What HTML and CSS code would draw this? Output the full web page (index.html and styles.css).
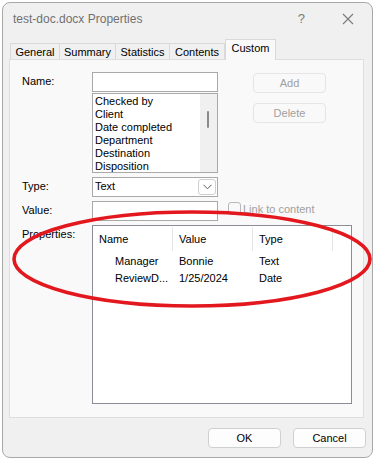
FILE: index.html
```html
<!DOCTYPE html>
<html lang="en">
<head>
    <meta charset="UTF-8">
    <title>test-doc.docx Properties</title>
    <link rel="stylesheet" href="styles.css">
</head>
<body>
    <div class="window">
        <div class="titlebar">
            <span class="title">test-doc.docx Properties</span>
            <span class="help">?</span>
            <svg class="close" width="12" height="12" viewBox="0 0 12 12">
                <path d="M1 1 L11 11 M11 1 L1 11" stroke="#7a7a7a" stroke-width="1.1" fill="none"/>
            </svg>
        </div>

        <div class="tabs">
            <div class="tab" style="width:50px">General</div>
            <div class="tab" style="width:57px">Summary</div>
            <div class="tab" style="width:55px">Statistics</div>
            <div class="tab" style="width:56px">Contents</div>
            <div class="tab active" style="width:51px">Custom</div>
        </div>

        <div class="panel">
            <div class="row">
                <label class="lbl">Name:</label>
                <div class="field-col">
                    <div class="input"></div>
                    <div class="listbox">
                        <ul>
                            <li>Checked by</li>
                            <li>Client</li>
                            <li>Date completed</li>
                            <li>Department</li>
                            <li>Destination</li>
                            <li>Disposition</li>
                        </ul>
                        <div class="scroll"><span class="thumb"></span></div>
                    </div>
                </div>
                <div class="side-buttons">
                    <button class="btn disabled">Add</button>
                    <button class="btn disabled">Delete</button>
                </div>
            </div>

            <div class="row gap">
                <label class="lbl">Type:</label>
                <div class="select">
                    <span>Text</span>
                    <span class="drop">
                        <svg width="9" height="6" viewBox="0 0 9 6"><path d="M0.5 0.8 L4.5 4.8 L8.5 0.8" stroke="#5a5a5a" stroke-width="1" fill="none"/></svg>
                    </span>
                </div>
            </div>

            <div class="row gap">
                <label class="lbl">Value:</label>
                <div class="input"></div>
                <div class="check">
                    <span class="box"></span>
                    <span>Link to content</span>
                </div>
            </div>

            <div class="row gap">
                <label class="lbl">Properties:</label>
                <div class="listview">
                    <div class="lv-head">
                        <span class="col">Name</span>
                        <span class="col">Value</span>
                        <span class="col">Type</span>
                        <span class="col rest"></span>
                    </div>
                    <div class="lv-row">
                        <span class="col first">Manager</span>
                        <span class="col">Bonnie</span>
                        <span class="col">Text</span>
                    </div>
                    <div class="lv-row">
                        <span class="col first">ReviewD...</span>
                        <span class="col">1/25/2024</span>
                        <span class="col">Date</span>
                    </div>
                </div>
            </div>
        </div>

        <div class="footer">
            <button class="btn">OK</button>
            <button class="btn">Cancel</button>
        </div>

        <!-- red annotation ring -->
        <svg class="ring" width="374" height="459" viewBox="0 0 374 459">
            <ellipse cx="192" cy="259" rx="178" ry="47" stroke="#e3181e" stroke-width="3.6" fill="none"/>
        </svg>
    </div>
</body>
</html>
```

FILE: styles.css
```css
body {
    margin: 0;
    background-color: #ffffff;
    font-family: "Liberation Sans", Arial, sans-serif;
    font-size: 11px;
    color: #000;
}
.window {
    position: relative;
    box-sizing: border-box;
    width: 371px;
    height: 456px;
    margin: 2px 0 0 2px;
    border: 1px solid #a8a8a8;
    border-radius: 8px;
    background-color: #f0f0f0;
    display: flex;
    flex-direction: column;
}
.titlebar {
    height: 36px;
    display: flex;
    align-items: center;
    padding-left: 10px;
}
.title {
    font-size: 12px;
    color: #707070;
    flex: 1;
    margin-top: -5px;
}
.help {
    font-size: 13px;
    color: #7a7a7a;
    margin-right: 37px;
    margin-top: -5px;
}
.close {
    margin-right: 18px;
    margin-top: -5px;
}
.tabs {
    display: flex;
    align-items: flex-end;
    padding-left: 7px;
    height: 20px;
    position: relative;
    z-index: 1;
}
.tab {
    box-sizing: border-box;
    height: 16px;
    border: 1px solid #d9d9d9;
    border-bottom: none;
    margin-right: -1px;
    background-color: #f0f0f0;
    text-align: center;
    line-height: 16px;
    color: #000;
}
.tab.active {
    height: 21px;
    background-color: #f9f9f9;
    line-height: 16px;
    margin-bottom: -1px;
    margin-left: 1px;
}
.panel {
    box-sizing: border-box;
    width: 355px;
    height: 359px;
    margin-left: 6px;
    border: 1px solid #dedede;
    background-color: #f9f9f9;
    padding: 12px 0 0 12px;
}
.row {
    display: flex;
    align-items: flex-start;
}
.row.gap {
    margin-top: 4px;
}
.lbl {
    width: 70px;
    padding-top: 3px;
    color: #000;
}
.field-col {
    display: flex;
    flex-direction: column;
}
.input {
    box-sizing: border-box;
    width: 126px;
    height: 20px;
    border: 1px solid #a9a9a9;
    background-color: #fff;
}
.listbox {
    box-sizing: border-box;
    width: 126px;
    height: 80px;
    margin-top: 1px;
    border: 1px solid #a9a9a9;
    background-color: #fff;
    display: flex;
    overflow: hidden;
}
.listbox ul {
    list-style: none;
    margin: 0;
    padding: 1px 0 0 2px;
    flex: 1;
}
.listbox li {
    height: 13px;
    line-height: 13px;
}
.scroll {
    width: 17px;
    background-color: #f0f0f0;
    position: relative;
}
.thumb {
    position: absolute;
    left: 7px;
    top: 17px;
    width: 2px;
    height: 17px;
    background-color: #8a8a8a;
    border-radius: 1px;
}
.side-buttons {
    display: flex;
    flex-direction: column;
    gap: 10px;
    margin-left: 35px;
    margin-top: 1px;
}
.btn {
    box-sizing: border-box;
    width: 73px;
    height: 20px;
    border: 1px solid #d0d0d0;
    border-radius: 4px;
    background-color: #fdfdfd;
    font-family: "Liberation Sans", Arial, sans-serif;
    font-size: 11px;
    color: #000;
    padding: 0;
}
.btn.disabled {
    border-color: #e5e5e5;
    background-color: #f9f9f9;
    color: #a0a0a0;
}
.select {
    box-sizing: border-box;
    width: 126px;
    height: 20px;
    border: 1px solid #a9a9a9;
    background-color: #fff;
    display: flex;
    align-items: center;
    justify-content: space-between;
    padding-left: 2px;
}
.select span:first-child {
    margin-top: -3px;
}
.drop {
    box-sizing: border-box;
    width: 18px;
    height: 16px;
    margin-right: 1px;
    border: 1px solid #cfcfcf;
    border-radius: 3px;
    display: flex;
    align-items: center;
    justify-content: center;
}
.check {
    display: flex;
    align-items: center;
    margin-left: 10px;
    margin-top: 1px;
    color: #a0a0a0;
    font-size: 11px;
}
.check .box {
    box-sizing: border-box;
    width: 13px;
    height: 13px;
    border: 1px solid #b8b8b8;
    border-radius: 3px;
    background-color: #f9f9f9;
    margin-right: 2px;
}
.listview {
    box-sizing: border-box;
    width: 260px;
    height: 179px;
    border: 1px solid #8c8c96;
    background-color: #fff;
}
.lv-head {
    display: flex;
    height: 24px;
    margin-top: 1px;
}
.lv-head .col {
    box-sizing: border-box;
    width: 80px;
    border-right: 1px solid #e5e5e5;
    padding-left: 6px;
    line-height: 24px;
}
.lv-head .col.rest {
    width: 18px;
    border-right: none;
}
.lv-row {
    display: flex;
    height: 17px;
    line-height: 17px;
}
.lv-row .col {
    width: 80px;
    padding-left: 6px;
    box-sizing: border-box;
}
.lv-row .col.first {
    padding-left: 22px;
}
.lv-head + .lv-row {
    margin-top: 2px;
}
.footer {
    display: flex;
    justify-content: flex-end;
    gap: 12px;
    padding: 10px 6px 0 0;
}
.ring {
    position: absolute;
    left: -3px;
    top: -3px;
    pointer-events: none;
}
```
